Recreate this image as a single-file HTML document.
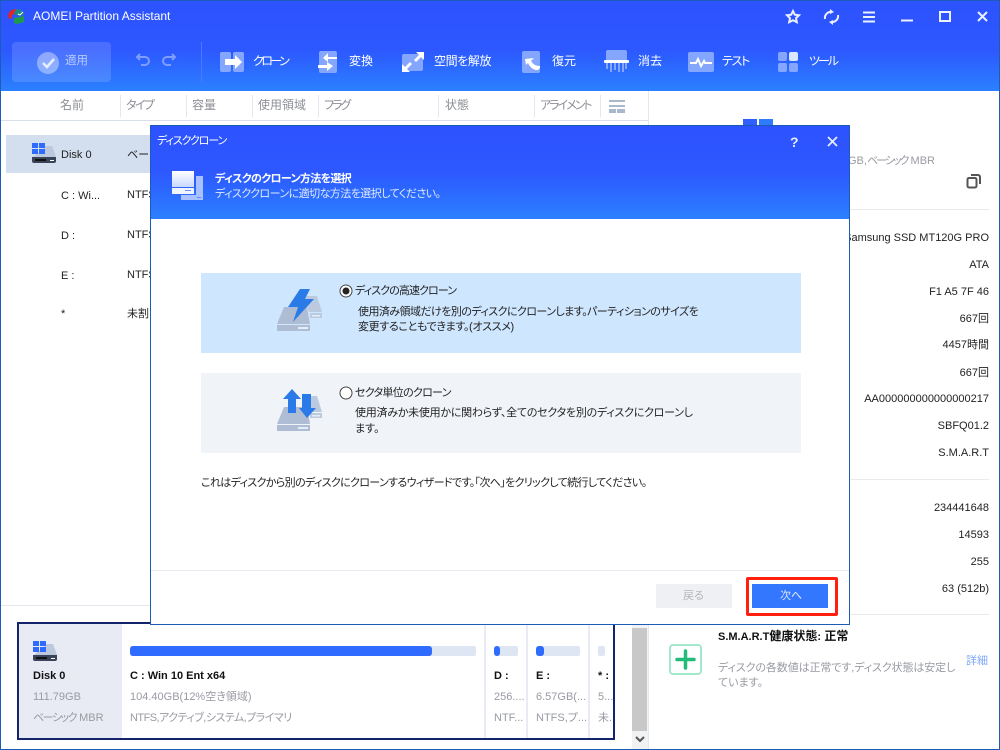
<!DOCTYPE html>
<html lang="ja"><head><meta charset="utf-8"><title>AOMEI Partition Assistant</title>
<style>
html,body{margin:0;padding:0;background:#fff}
#p{position:relative;width:1000px;height:750px;overflow:hidden;background:#fff;font-family:"Liberation Sans","Noto Sans CJK JP",sans-serif;font-size:11px;color:#222;font-feature-settings:"palt" 1}
#p div,#p svg{position:absolute}
.t{position:absolute;white-space:nowrap;line-height:16px}
.r{position:absolute;white-space:nowrap;line-height:16px;right:11px;color:#222;font-size:11px}
.r b{font-weight:normal;font-size:11px}
.l{font-size:11px}
.h{color:#8d8f96;top:97px;font-size:12px}
.s{position:absolute;width:1px;background:#e3e7ef;top:95px;height:22px}
.w{color:#fff;top:53px;font-size:12px}
.g{color:#999ba3}
.hl{position:absolute;height:1px;background:#e9ebef}
.bar{position:absolute;height:10px;background:#dfe6f3;border-radius:2px}
.fill{position:absolute;left:0;top:0;height:10px;background:#2f6bff;border-radius:3px}
.vs{position:absolute;width:2px;background:#e8ebf3;top:624px;height:114px}
</style></head><body><div id="p">

<div style="left:0;top:0;width:1000px;height:91px;background:linear-gradient(#2d52ff 0,#2d58ff 55%,#2b80ff 100%)"></div>
<svg style="left:7px;top:8px" width="20" height="18" viewBox="0 0 20 18"><path d="M1 8C1 4 5 1 9 1l2 3-6 3v3l-3 1z" fill="#d8282c"/><path d="M9 1c5 0 8 3 8 6l-6 1-4-2z" fill="#1d8a88"/><path d="M7 10l10-2v6l-7 2-3-1z" fill="#1f9a4c"/><path d="M11 6l2 1 3-3" stroke="#fff" fill="none"/></svg>
<span class="t" style="left:33px;top:8px;color:#fff;font-size:12px">AOMEI Partition Assistant</span>

<svg style="left:784px;top:7px" width="216" height="20" viewBox="784 7 216 20" fill="none" stroke="#eaf0ff" stroke-width="2"><path d="M793 11l1.800 3.700 4.200.5-3 2.900.8 4.100-3.800-2-3.800 2 .8-4.100-3-2.900 4.200-.5z"/><path d="M825 19a6 6 0 0 1 7-7M838 15a6 6 0 0 1-7 7"/><path d="M830 9l4 3-4 2zM833 25l-4-3 4-2z" fill="#eaf0ff" stroke="none"/><path d="M863 12.500h12M863 17h12M863 21.500h12"/><path d="M901 20.500h12"/><rect x="940" y="12" width="10" height="9"/><path d="M978 12l9 9M987 12l-9 9"/></svg>

<div style="left:12px;top:42px;width:99px;height:40px;background:rgba(255,255,255,.14);border-radius:4px"></div>
<div style="left:37px;top:52px;width:22px;height:22px;border-radius:50%;background:rgba(255,255,255,.38)"></div>
<svg style="left:37px;top:52px" width="22" height="22"><path d="M6 11l4 4 7-8" stroke="#e8eeff" stroke-width="2.500" fill="none"/></svg>
<span class="t" style="left:65px;top:53px;color:#b9ccff;font-size:11.500px">適用</span>
<svg style="left:134px;top:52px" width="44" height="17" fill="none" stroke="#7f9dff" stroke-width="2"><path d="M3 5h8a4 4 0 0 1 0 8H7M6 2L3 5l3 3"/><path d="M41 5h-8a4 4 0 0 0 0 8h4M38 2l3 3-3 3"/></svg>
<div style="left:201px;top:42px;width:1px;height:40px;background:#4c78ff"></div>

<svg style="left:220px;top:50px" width="24" height="23"><rect x="0" y="2" width="11" height="20" rx="2" fill="#85a6ff"/><rect x="13" y="2" width="11" height="20" rx="2" fill="#85a6ff"/><path d="M5 9h10V5l7 7-7 7v-4H5z" fill="#fff"/></svg>
<span class="t w" style="left:253px;letter-spacing:-2.500px">クローン</span>
<svg style="left:318px;top:50px" width="20" height="24"><rect x="1" y="1" width="18" height="22" rx="2" fill="#85a6ff"/><path d="M19 7H10V3L5 8l5 4V9h9zM0 18h9v3l6-5-6-4v3H0z" fill="#fff"/></svg>
<span class="t w" style="left:349px">変換</span>
<svg style="left:401px;top:52px" width="24" height="20"><rect x="1" y="2" width="21" height="17" rx="2" fill="#85a6ff"/><path d="M23 0v8l-3-3-5 5-2-2 5-5-3-3zM1 20v-8l3 3 5-5 2 2-5 5 3 3z" fill="#fff"/></svg>
<span class="t w" style="left:434px;letter-spacing:-.4px">空間を解放</span>
<svg style="left:521px;top:50px" width="24" height="24"><rect x="1" y="1" width="18" height="22" rx="2" fill="#85a6ff"/><path d="M4 9l9-1-3 3c2 3 4 5 9 5 0 4-2 4-4 4-4-1-6-3-8-7l-2 2z" fill="#fff"/></svg>
<span class="t w" style="left:552px">復元</span>
<svg style="left:604px;top:49px" width="25" height="25"><rect x="2" y="1" width="21" height="11" rx="2" fill="#85a6ff"/><rect x="0" y="11" width="25" height="3" rx="1" fill="#fff"/><path d="M3 14v6M7 14v9M11 14v7M15 14v9M19 14v9M22 14v6" stroke="#85a6ff" stroke-width="2"/></svg>
<span class="t w" style="left:638px">消去</span>
<svg style="left:688px;top:52px" width="26" height="20"><rect x="0" y="0" width="26" height="20" rx="2" fill="#85a6ff"/><path d="M2 11h6l2-4 3 7 3-5 1 2h7" stroke="#fff" stroke-width="2" fill="none"/></svg>
<span class="t w" style="left:722px;letter-spacing:-1.300px">テスト</span>
<svg style="left:778px;top:52px" width="20" height="20"><rect x="0" y="0" width="9" height="9" rx="2" fill="#85a6ff"/><rect x="11" y="0" width="9" height="9" rx="2" fill="#dbe6ff"/><rect x="0" y="11" width="9" height="9" rx="2" fill="#85a6ff"/><rect x="11" y="11" width="9" height="9" rx="2" fill="#85a6ff"/></svg>
<span class="t w" style="left:809px;letter-spacing:-2px">ツール</span>

<span class="t h" style="left:60px">名前</span><span class="t h" style="left:126px;letter-spacing:-1.600px">タイプ</span><span class="t h" style="left:192px">容量</span><span class="t h" style="left:258px">使用領域</span><span class="t h" style="left:324px;letter-spacing:-2px">フラグ</span><span class="t h" style="left:445px">状態</span><span class="t h" style="left:540px;letter-spacing:-2px">アライメント</span>
<i class="s" style="left:120px"></i><i class="s" style="left:186px"></i><i class="s" style="left:252px"></i><i class="s" style="left:318px"></i><i class="s" style="left:438px"></i><i class="s" style="left:534px"></i><i class="s" style="left:600px"></i>
<svg style="left:609px;top:100px" width="16" height="13" fill="#aab8cc"><rect width="16" height="2"/><rect y="5" width="16" height="2"/><rect y="9" width="7" height="4"/><rect x="8" y="9" width="8" height="4"/></svg>
<div style="left:0;top:120px;width:648px;height:1px;background:#d9e0ec"></div>
<div style="left:648px;top:91px;width:1px;height:660px;background:#e3e7ef"></div>

<div style="left:6px;top:135px;width:146px;height:38px;background:#d3deee"></div>
<svg style="left:32px;top:143px" width="25" height="20"><path d="M14 3h6l4 11v5H1v-5z" fill="#bcc8dd"/><path d="M0 14h24v4a2 2 0 0 1-2 2H2a2 2 0 0 1-2-2z" fill="#3a4358"/><rect x="3" y="16" width="11" height="2" fill="#111"/><rect x="18" y="17" width="4" height="1" fill="#fff"/><path d="M0 0h6v5H0zM7 0h6v5H7zM0 6h6v5H0zM7 6h6v5H7z" fill="#2f6bff"/></svg>
<span class="t" style="left:61px;top:147px">Disk 0</span><span class="t" style="left:127px;top:147px">ベーシ</span>
<span class="t" style="left:61px;top:188px">C : Wi...</span><span class="t" style="left:127px;top:187px">NTFS</span>
<span class="t" style="left:61px;top:228px">D :</span><span class="t" style="left:127px;top:227px">NTFS</span>
<span class="t" style="left:61px;top:268px">E :</span><span class="t" style="left:127px;top:267px">NTFS</span>
<span class="t" style="left:61px;top:306px">*</span><span class="t" style="left:127px;top:306px">未割</span>

<div style="left:743px;top:119px;width:14px;height:8px;background:#2f5fff"></div><div style="left:759px;top:119px;width:14px;height:8px;background:#2f7aff"></div>
<span class="t g" style="left:848px;top:153px">GB,<span style="letter-spacing:-2px">ベーシック</span> MBR</span>
<svg style="left:966px;top:174px" width="15" height="15" fill="none" stroke="#555" stroke-width="2"><rect x="1.500" y="4" width="9" height="9.500" rx="1.500"/><path d="M5 1h7a2 2 0 0 1 2 2v7"/></svg>
<div class="hl" style="left:850px;top:209px;width:139px"></div>
<span class="r" style="top:230px">Samsung SSD MT120G PRO</span>
<span class="r" style="top:257px">ATA</span>
<span class="r" style="top:284px">F1 A5 7F 46</span>
<span class="r" style="top:311px">667<b>回</b></span>
<span class="r" style="top:337px">4457<b>時間</b></span>
<span class="r" style="top:365px">667<b>回</b></span>
<span class="r" style="top:391px">AA000000000000000217</span>
<span class="r" style="top:418px">SBFQ01.2</span>
<span class="r" style="top:445px">S.M.A.R.T</span>
<div class="hl" style="left:850px;top:479px;width:139px"></div>
<span class="r" style="top:500px">234441648</span>
<span class="r" style="top:527px">14593</span>
<span class="r" style="top:554px">255</span>
<span class="r" style="top:581px">63 (512b)</span>
<div class="hl" style="left:850px;top:614px;width:139px"></div>

<span class="t" style="left:718px;top:628px;font-weight:bold;color:#111;font-size:12px"><span class="l">S.M.A.R.T</span>健康状態<span class="l">:</span> 正常</span>
<svg style="left:669px;top:644px" width="33" height="32"><rect x="1" y="1" width="31" height="29" rx="3" fill="#fff" stroke="#a4e8cc" stroke-width="2"/><path d="M16.500 7v17M8 15.500h17" stroke="#22bb7a" stroke-width="3.500" stroke-linecap="round"/></svg>
<span class="t g" style="left:718px;top:660px;letter-spacing:-.1px">ディスクの各数値は正常です,ディスク状態は安定し</span>
<span class="t g" style="left:718px;top:675px">ています。</span>
<span class="t" style="left:966px;top:653px;color:#7ea8f5">詳細</span>

<div style="left:0;top:605px;width:648px;height:1px;background:#e3e7ef"></div>
<div style="left:17px;top:622px;width:594px;height:114px;border:2px solid #14246b;background:#fff"></div>
<div style="left:19px;top:624px;width:103px;height:114px;background:#e8ebf3"></div>
<svg style="left:33px;top:641px" width="25" height="20"><path d="M14 3h6l4 11v5H1v-5z" fill="#bcc8dd"/><path d="M0 14h24v4a2 2 0 0 1-2 2H2a2 2 0 0 1-2-2z" fill="#3a4358"/><rect x="3" y="16" width="11" height="2" fill="#111"/><rect x="18" y="17" width="4" height="1" fill="#fff"/><path d="M0 0h6v5H0zM7 0h6v5H7zM0 6h6v5H0zM7 6h6v5H7z" fill="#2f6bff"/></svg>
<span class="t" style="left:33px;top:668px;font-weight:bold;color:#111">Disk 0</span>
<span class="t g" style="left:33px;top:689px">111.79GB</span>
<span class="t g" style="left:33px;top:710px"><span style="letter-spacing:-1.500px">ベーシック</span> MBR</span>
<div class="bar" style="left:130px;top:646px;width:346px"><div class="fill" style="width:302px"></div></div>
<span class="t" style="left:130px;top:668px;font-weight:bold;color:#111">C : Win 10 Ent x64</span>
<span class="t g" style="left:130px;top:689px">104.40GB(12%空き領域)</span>
<span class="t g" style="left:130px;top:710px;letter-spacing:-.55px">NTFS,アクティブ,システム,プライマリ</span>
<i class="vs" style="left:484px"></i>
<div class="bar" style="left:494px;top:646px;width:24px"><div class="fill" style="width:6px"></div></div>
<span class="t" style="left:494px;top:668px;font-weight:bold;color:#111">D :</span>
<span class="t g" style="left:494px;top:689px">256....</span><span class="t g" style="left:494px;top:710px">NTF...</span>
<i class="vs" style="left:526px"></i>
<div class="bar" style="left:536px;top:646px;width:44px"><div class="fill" style="width:8px"></div></div>
<span class="t" style="left:536px;top:668px;font-weight:bold;color:#111">E :</span>
<span class="t g" style="left:536px;top:689px">6.57GB(...</span><span class="t g" style="left:536px;top:710px">NTFS,プ...</span>
<i class="vs" style="left:588px"></i>
<div class="bar" style="left:598px;top:646px;width:7px"></div>
<span class="t" style="left:598px;top:668px;font-weight:bold;color:#111">* :</span>
<span class="t g" style="left:598px;top:689px">5...</span><span class="t g" style="left:598px;top:710px">未.</span>
<div style="left:632px;top:620px;width:16px;height:130px;background:#f1f2f4"></div>
<div style="left:632px;top:628px;width:15px;height:103px;background:#c8c8c8"></div>
<svg style="left:635px;top:736px" width="10" height="8"><path d="M1 1l4 4 4-4" stroke="#555" stroke-width="2" fill="none"/></svg>

<div style="left:0;top:0;width:998px;height:748px;border:1px solid #1a5cb8"></div>

<div style="left:150px;top:125px;width:698px;height:498px;border:1px solid #1a5cb8;background:#fff"></div>
<div style="left:151px;top:126px;width:698px;height:93px;background:linear-gradient(#2d52ff 0,#2d58ff 50%,#2b80ff 100%)"></div>
<span class="t" style="left:157px;top:133px;color:#fff;letter-spacing:-1.100px">ディスククローン</span>
<span class="t" style="left:790px;top:134px;color:#e6edff;font-size:14px;font-weight:bold">?</span>
<svg style="left:826px;top:135px" width="13" height="13"><path d="M2 2l9 9M11 2l-9 9" stroke="#e6edff" stroke-width="1.800"/></svg>
<svg style="left:171px;top:170px" width="33" height="32"><defs><linearGradient id="m" x1="0" y1="0" x2="0" y2="1"><stop offset="0" stop-color="#fff"/><stop offset="1" stop-color="#c8d8ff"/></linearGradient></defs><rect x="1" y="1" width="22" height="16" fill="url(#m)"/><rect x="1" y="18" width="22" height="6" fill="#f0f4ff"/><rect x="14" y="20" width="6" height="1" fill="#6d8eff"/><rect x="25" y="6" width="7" height="20" fill="#a9c1ff"/><rect x="10" y="25" width="22" height="5" fill="#a9c1ff"/><rect x="26" y="27" width="4" height="1" fill="#5a86ff"/></svg>
<span class="t" style="left:215px;top:171px;color:#fff;font-weight:bold;letter-spacing:-.65px">ディスクのクローン方法を選択</span>
<span class="t" style="left:215px;top:186px;color:#e0eaff;letter-spacing:-.55px">ディスククローンに適切な方法を選択してください。</span>

<div style="left:201px;top:273px;width:600px;height:80px;background:#cfe6ff"></div>
<svg style="left:276px;top:288px" width="48" height="46"><path d="M27 8h14l5 16H33z" fill="#bccae0"/><rect x="34" y="25" width="12" height="5" fill="#bccae0"/><rect x="36" y="27" width="8" height="1.500" fill="#e4edf8"/><path d="M8 19h23l3 17H1z" fill="#aebcd4"/><rect x="1" y="37" width="33" height="6" fill="#aebcd4"/><rect x="22" y="39" width="10" height="2" fill="#e4edf8"/><path d="M24 1h10l-5 10h9L17 34l5-15H12z" fill="#2a7be8"/></svg>
<svg style="left:339px;top:284px" width="14" height="14"><circle cx="7" cy="7" r="6" fill="#fff" stroke="#444"/><circle cx="7" cy="7" r="3.500" fill="#222"/></svg>
<span class="t" style="left:355px;top:283px;letter-spacing:-.9px">ディスクの高速クローン</span>
<span class="t" style="left:358px;top:304px;letter-spacing:-.55px">使用済み領域だけを別のディスクにクローンします。パーティションのサイズを</span>
<span class="t" style="left:358px;top:319px;letter-spacing:-.35px">変更することもできます。(オススメ)</span>

<div style="left:201px;top:373px;width:600px;height:80px;background:#f0f3f8"></div>
<svg style="left:276px;top:388px" width="48" height="46"><path d="M27 8h14l5 16H33z" fill="#bccae0"/><rect x="34" y="25" width="12" height="5" fill="#bccae0"/><rect x="36" y="27" width="8" height="1.500" fill="#e4edf8"/><path d="M8 19h23l3 17H1z" fill="#aebcd4"/><rect x="1" y="37" width="33" height="6" fill="#aebcd4"/><rect x="22" y="39" width="10" height="2" fill="#e4edf8"/><path d="M16 1l9 10h-5v14h-8V11H7z" fill="#2a7be8"/><path d="M26 6h9v14h5l-9 10-8-10h3z" fill="#2a7be8"/></svg>
<svg style="left:339px;top:386px" width="14" height="14"><circle cx="7" cy="7" r="6" fill="#fff" stroke="#444"/></svg>
<span class="t" style="left:355px;top:385px;letter-spacing:-.7px">セクタ単位のクローン</span>
<span class="t" style="left:355px;top:405px;letter-spacing:-.25px">使用済みか未使用かに関わらず、全てのセクタを別のディスクにクローンし</span>
<span class="t" style="left:355px;top:421px">ます。</span>
<span class="t" style="left:201px;top:475px;letter-spacing:-.65px">これはディスクから別のディスクにクローンするウィザードです。「次へ」をクリックして続行してください。</span>

<div style="left:151px;top:570px;width:698px;height:1px;background:#e6eaf0"></div>
<div style="left:656px;top:584px;width:76px;height:24px;background:#eff0f3"></div>
<span class="t" style="left:683px;top:588px;color:#b4b6bb">戻る</span>
<div style="left:752px;top:584px;width:76px;height:24px;background:#3377ff"></div>
<span class="t" style="left:780px;top:588px;color:#dfe9ff">次へ</span>
<div style="left:746px;top:577px;width:86px;height:33px;border:3px solid #ff2010;border-radius:2px"></div>
</div></body></html>
